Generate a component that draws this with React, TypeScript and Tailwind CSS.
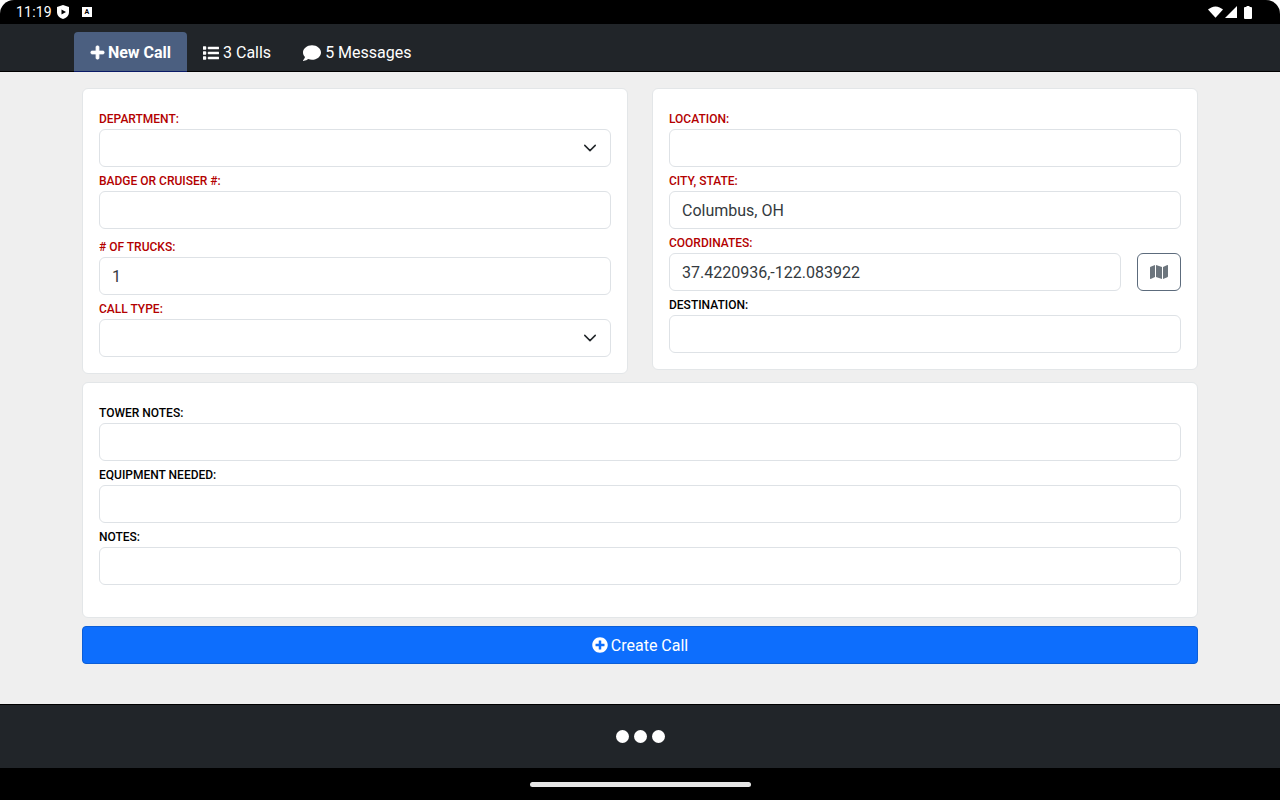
import React from 'react';
import { FaPlus, FaList, FaComment, FaMap, FaPlusCircle } from 'react-icons/fa';

const Chevron = () => (
    <svg viewBox="0 0 16 16" className="w-[14px] h-[14px]" fill="none" stroke="#212529" strokeWidth="1.7" strokeLinecap="round" strokeLinejoin="round">
        <path d="m2 5 6 6 6-6" />
    </svg>
);

const Field: React.FC<{ label: string; value?: string; required?: boolean; select?: boolean; className?: string }> = ({ label, value, required, select, className = '' }) => (
    <div className={className}>
        <div className={`h-[18px] mb-[2px] pt-px text-[12px] leading-[18px] font-medium uppercase ${required ? 'text-[#b30000]' : 'text-black'}`}>{label}</div>
        <div className="h-[38px] flex items-center justify-between pl-3 pr-[13px] bg-white border border-[#dee2e6] rounded-[6px] text-[16px] text-[#343a40]">
            <span className="pt-px">{value}</span>
            {select && <Chevron />}
        </div>
    </div>
);

export default function App() {
    return (
        <div className="w-[1280px] h-[800px] flex flex-col overflow-hidden bg-[#efefef] font-['Roboto',sans-serif]">
            {/* status bar */}
            <div className="h-6 bg-white shrink-0">
                <div className="h-6 bg-black rounded-t-[14px] flex items-center justify-between pl-4 pr-[28px] text-white">
                    <div className="flex items-center">
                        <span className="text-[14px] tracking-[0.2px]">11:19</span>
                        <svg viewBox="0 0 12 14" className="w-3 h-[14px] ml-[5px]">
                            <path d="M6 0 12 2v5c0 3.4-2.5 6-6 7-3.5-1-6-3.6-6-7V2z" fill="#fff" />
                            <path d="M4.5 4.5v5L9 7z" fill="#000" />
                        </svg>
                        <div className="w-[10px] h-[10px] ml-[13px] bg-white flex items-center justify-center text-black text-[7px] font-bold leading-none">A</div>
                    </div>
                    <div className="flex items-center">
                        <svg viewBox="0 0 16 12" className="w-[15px] h-3"><path d="M0 3.4C2 1.4 5 0 8 0s6 1.4 8 3.4L8 12z" fill="#fff" /></svg>
                        <svg viewBox="0 0 12 12" className="w-3 h-3 ml-[2px]"><path d="M12 0v12H0z" fill="#fff" /></svg>
                        <svg viewBox="0 0 8 13" className="w-2 h-[13px] ml-[7px]"><path d="M2.5 0h3v1H7a1 1 0 0 1 1 1v10a1 1 0 0 1-1 1H1a1 1 0 0 1-1-1V2a1 1 0 0 1 1-1h1.5z" fill="#fff" /></svg>
                    </div>
                </div>
            </div>

            {/* nav */}
            <div className="h-12 shrink-0 bg-[#212529] border-b border-black flex items-end pl-[74px] text-white text-[16px]">
                <div className="h-10 w-[113px] -mb-px pt-[2px] flex items-center justify-center gap-[3px] bg-[#4b5f80] border-b border-[#0a1a66] rounded-t-[4px] font-bold">
                    <FaPlus className="w-[15px] h-[15px]" stroke="currentColor" strokeWidth={30} />
                    <span>New Call</span>
                </div>
                <div className="h-[39px] pt-[2px] flex items-center gap-1 ml-4">
                    <FaList className="w-4 h-[18px]" stroke="currentColor" strokeWidth={16} />
                    <span>3 Calls</span>
                </div>
                <div className="h-[39px] pt-[2px] flex items-center gap-1 ml-8">
                    <FaComment className="w-[18px] h-[18px]" />
                    <span>5 Messages</span>
                </div>
            </div>

            {/* form */}
            <div className="flex-1 pt-4 px-[82px]">
                <div className="flex items-start justify-between">
                    <div className="w-[546px] bg-white border border-[#e3e6e8] rounded-[6px] pt-5 pb-4 px-4 flex flex-col gap-1">
                        <Field label="Department:" required select />
                        <Field label="Badge or Cruiser #:" required className="mb-1" />
                        <Field label="# of Trucks:" required value="1" />
                        <Field label="Call Type:" required select />
                    </div>
                    <div className="w-[546px] bg-white border border-[#e3e6e8] rounded-[6px] pt-5 pb-4 px-4 flex flex-col gap-1">
                        <Field label="Location:" required />
                        <Field label="City, State:" required value="Columbus, OH" />
                        <div className="flex items-end gap-4">
                            <Field label="Coordinates:" required value="37.4220936,-122.083922" className="flex-1" />
                            <button className="w-11 h-[38px] flex items-center justify-center bg-white border border-[#5c6b7c] rounded-[6px] text-[#6c757d]">
                                <FaMap className="w-[18px] h-[16px]" />
                            </button>
                        </div>
                        <Field label="Destination:" />
                    </div>
                </div>

                <div className="mt-2 bg-white border border-[#e3e6e8] rounded-[6px] pt-5 pb-8 px-4 flex flex-col gap-1">
                    <Field label="Tower Notes:" />
                    <Field label="Equipment Needed:" />
                    <Field label="Notes:" />
                </div>

                <button className="mt-2 w-full h-[38px] flex items-center justify-center gap-[3px] bg-[#0d6efd] border border-[#0b5ed7] rounded-[4px] text-white text-[16px]">
                    <FaPlusCircle className="w-4 h-4" />
                    <span className="pt-px">Create Call</span>
                </button>
            </div>

            {/* footer */}
            <div className="h-16 shrink-0 bg-[#212529] border-t border-black flex items-center justify-center gap-[5px]">
                <div className="w-[13px] h-[13px] rounded-full bg-white" />
                <div className="w-[13px] h-[13px] rounded-full bg-white" />
                <div className="w-[13px] h-[13px] rounded-full bg-white" />
            </div>

            {/* android nav */}
            <div className="h-8 shrink-0 bg-black flex items-center justify-center">
                <div className="w-[221px] h-[5px] rounded-full bg-[#e6e6e6]" />
            </div>
        </div>
    );
}
